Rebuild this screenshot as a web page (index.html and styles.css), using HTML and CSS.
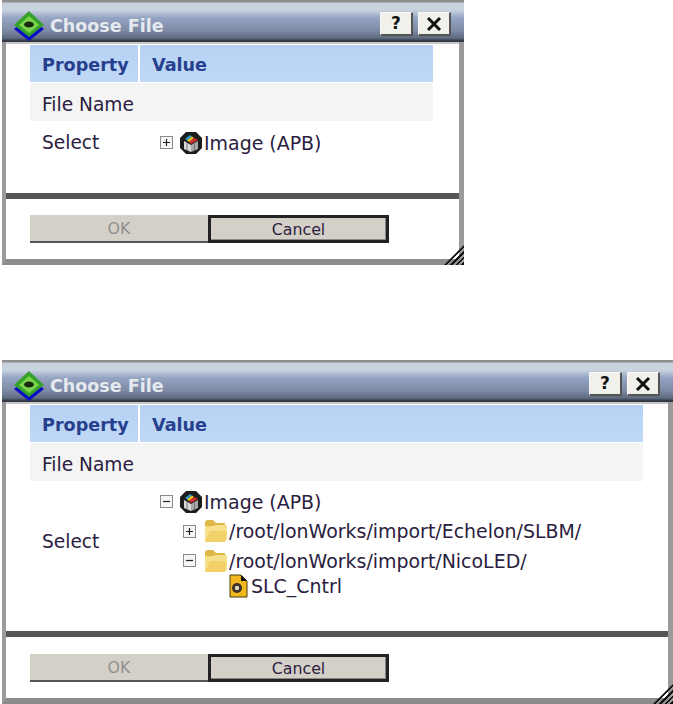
FILE: index.html
```html
<!DOCTYPE html>
<html lang="en">
<head>
  <meta charset="UTF-8" />
  <title>Choose File</title>
  <link rel="stylesheet" href="styles.css">
</head>
<body>
  <svg class="defs" width="0" height="0">
    <symbol id="logo" viewBox="0 0 32 32">
      <path d="M16 7 L31 19 L16 31 L1 19 Z" fill="#0a0ac8"/>
      <path d="M16 1 L31 15 L16 27 L1 15 Z" fill="#35a02a"/>
      <path d="M16 6 L26 15 L16 23 L6 15 Z" fill="#7cd44a"/>
      <ellipse cx="16" cy="14.5" rx="5" ry="3" fill="#1a2a10"/>
    </symbol>
    <symbol id="plus" viewBox="0 0 13 13">
      <rect x="0.5" y="0.5" width="12" height="12" fill="#f6f6f6" stroke="#8a8a8a"/>
      <path d="M3 6.5 H10 M6.5 3 V10" stroke="#222" stroke-width="1.2"/>
    </symbol>
    <symbol id="minus" viewBox="0 0 13 13">
      <rect x="0.5" y="0.5" width="12" height="12" fill="#f6f6f6" stroke="#8a8a8a"/>
      <path d="M3 6.5 H10" stroke="#222" stroke-width="1.2"/>
    </symbol>
    <symbol id="image" viewBox="0 0 24 24">
      <path d="M7 1 H17 L23 7 V17 L17 23 H7 L1 17 V7 Z" fill="#1c1c1c"/>
      <path d="M5 10 L12 14 V21 L5 18 Z" fill="#d8d8d8"/>
      <path d="M12 14 L19 10 V18 L12 21 Z" fill="#a8a8a8"/>
      <path d="M6 8 L11 4 L13 5.5 L8 9.5 Z" fill="#2a9ad0"/>
      <path d="M8 9.5 L13 5.5 L15 7 L10 11 Z" fill="#f0c820"/>
      <path d="M10 11 L15 7 L19 9 L12 13 Z" fill="#d03030"/>
      <path d="M8 12 V19 M15.5 13 V19" stroke="#777" stroke-width="1"/>
    </symbol>
    <symbol id="folder" viewBox="0 0 24 24">
      <path d="M1 4 Q1 1 4 1 H9 L12 4 H21 V8 H1 Z" fill="#e0b848"/>
      <path d="M1 23 V7 Q8 8 12 6 H23 V20 L21 23 Z" fill="#f6e08e"/>
      <path d="M1 23 L6 12 H23 L21 23 Z" fill="#f2d268"/>
    </symbol>
    <symbol id="cntrl" viewBox="0 0 19 24">
      <path d="M1 1 H12 L18 7 V23 H1 Z" fill="#f2b81e" stroke="#4a3a10"/>
      <path d="M12 1 V7 H18 Z" fill="#111"/>
      <circle cx="8" cy="14" r="5" fill="#3c3028"/>
      <circle cx="8" cy="14" r="2.2" fill="#e0d8c8"/>
    </symbol>
    <symbol id="close" viewBox="0 0 16 16">
      <path d="M2 2 L14 14 M14 2 L2 14" stroke="#111" stroke-width="3"/>
    </symbol>
  </svg>

  <div class="dialog dialog-small">
    <div class="titlebar">
      <svg class="logo"><use href="#logo"/></svg>
      <span class="title">Choose File</span>
      <button class="win-btn">?</button>
      <button class="win-btn"><svg class="close-icon"><use href="#close"/></svg></button>
    </div>
    <div class="content">
      <div class="table">
        <div class="th">Property</div>
        <div class="th">Value</div>
        <div class="cell shade">File Name</div>
        <div class="cell shade"></div>
        <div class="cell select-label">Select</div>
        <div class="tree">
          <div class="node">
            <svg class="toggle"><use href="#plus"/></svg>
            <svg class="icon"><use href="#image"/></svg>
            <span>Image (APB)</span>
          </div>
        </div>
      </div>
    </div>
    <div class="footer">
      <button class="btn" disabled>OK</button>
      <button class="btn btn-default">Cancel</button>
    </div>
    <div class="grip"></div>
  </div>

  <div class="dialog dialog-large">
    <div class="titlebar">
      <svg class="logo"><use href="#logo"/></svg>
      <span class="title">Choose File</span>
      <button class="win-btn">?</button>
      <button class="win-btn"><svg class="close-icon"><use href="#close"/></svg></button>
    </div>
    <div class="content">
      <div class="table">
        <div class="th">Property</div>
        <div class="th">Value</div>
        <div class="cell shade">File Name</div>
        <div class="cell shade"></div>
        <div class="cell select-label">Select</div>
        <div class="tree">
          <div class="node">
            <svg class="toggle"><use href="#minus"/></svg>
            <svg class="icon"><use href="#image"/></svg>
            <span>Image (APB)</span>
          </div>
          <div class="node level-1">
            <svg class="toggle"><use href="#plus"/></svg>
            <svg class="icon"><use href="#folder"/></svg>
            <span>/root/lonWorks/import/Echelon/SLBM/</span>
          </div>
          <div class="node level-1">
            <svg class="toggle"><use href="#minus"/></svg>
            <svg class="icon"><use href="#folder"/></svg>
            <span>/root/lonWorks/import/NicoLED/</span>
          </div>
          <div class="node level-2">
            <svg class="icon icon-file"><use href="#cntrl"/></svg>
            <span>SLC_Cntrl</span>
          </div>
        </div>
      </div>
    </div>
    <div class="footer">
      <button class="btn" disabled>OK</button>
      <button class="btn btn-default">Cancel</button>
    </div>
    <div class="grip"></div>
  </div>
</body>
</html>
```

FILE: styles.css
```css
body {
  margin: 0;
  background-color: white;
  font-family: 'DejaVu Sans', sans-serif;
  font-size: 18.6px;
  color: #2a2140;
  overflow: hidden;
}

.defs {
  position: absolute;
}

.dialog {
  position: relative;
  margin-left: 2px;
  box-sizing: border-box;
  background-color: white;
  border-left: 4px solid #9a9a9a;
  border-right: 5px solid #9a9a9a;
  border-bottom: 6px solid #8c8c8c;
  display: flex;
  flex-direction: column;
}
.dialog-small {
  width: 462px;
  height: 265px;
}
.dialog-large {
  width: 671px;
  height: 344px;
  margin-top: 95px;
}

.titlebar {
  height: 42px;
  margin: 0 -5px 0 -4px;
  padding: 6px 13px 0 11px;
  box-sizing: border-box;
  display: flex;
  align-items: center;
  background: linear-gradient(#8d8d8d 0, #8d8d8d 2px, #c5d0dc 3px, #c9d4e0 10px, #93a3c2 18px, #7f8ca8 30px, #5f6b80 38px, #2f3640 41px);
}
.logo {
  width: 32px;
  height: 32px;
  margin-top: 4px;
}
.title {
  margin: 4px 0 0 5px;
  flex: 1;
  font-weight: bold;
  font-size: 17.5px;
  color: #e6e9ee;
}
.win-btn {
  width: 33px;
  height: 24px;
  margin-left: 5px;
  padding: 0;
  background-color: #f1f0ea;
  border: 1px solid #f8f8f8;
  border-right: 2px solid #555;
  border-bottom: 2px solid #555;
  font-family: 'DejaVu Sans', sans-serif;
  font-size: 17px;
  font-weight: bold;
  color: #111;
  line-height: 1;
}
.close-icon {
  width: 16px;
  height: 16px;
  display: block;
  margin: 0 auto;
}

.content {
  flex: 1;
  padding: 1px 26px 0 24px;
  display: flex;
  border-top: 2px solid #c8c8c8;
  border-bottom: 6px solid #555;
}
.dialog-large .content {
  padding-right: 25px;
}
.table {
  flex: 1;
  display: grid;
  grid-template-columns: 108px 1fr;
  grid-template-rows: 37px 38px 1fr;
  column-gap: 2px;
  row-gap: 1px;
  align-self: stretch;
  margin-bottom: 22px;
}
.th {
  background: linear-gradient(#b6d2f4, #c0d8f6);
  color: #26408e;
  font-weight: bold;
  font-size: 17.6px;
  padding: 2px 0 0 12px;
  display: flex;
  align-items: center;
}
.cell {
  display: flex;
  align-items: center;
  padding: 4px 0 0 12px;
  white-space: nowrap;
}
.select-label {
  padding: 0 0 8px 12px;
}
.shade {
  background-color: #f4f4f4;
}
.table .shade:nth-child(4) {
  margin-left: -2px;
}

.tree {
  display: flex;
  flex-direction: column;
  justify-content: center;
  padding-left: 20px;
  padding-bottom: 8px;
  font-size: 18.95px;
}
.node {
  display: flex;
  align-items: center;
  height: 29.5px;
}
.level-1 {
  padding-left: 23px;
}
.level-1 .toggle {
  margin-right: 8px;
}
.level-2 {
  padding-left: 69px;
  height: 21px;
}
.toggle {
  width: 13px;
  height: 13px;
  margin-right: 6px;
}
.icon {
  width: 24px;
  height: 24px;
  margin-right: 1px;
}
.icon-file {
  width: 19px;
  margin-right: 3px;
}

.footer {
  height: 60px;
  flex-shrink: 0;
  padding: 16px 0 0 24px;
  box-sizing: border-box;
  display: flex;
  align-items: flex-start;
}
.dialog-large .footer {
  height: 61px;
  padding-top: 17px;
}
.btn {
  width: 178px;
  height: 28px;
  padding: 0;
  font-family: 'DejaVu Sans', sans-serif;
  font-size: 15.8px;
  background-color: #d4d0c8;
  color: #2a2140;
  border: none;
}
.btn:disabled {
  color: #8f8f8f;
  border-bottom: 2px solid #555;
}
.btn-default {
  width: 181px;
  border: 3px solid #222;
  box-shadow: inset -1px -1px 0 #888;
}

.grip {
  position: absolute;
  right: -5px;
  bottom: -6px;
  width: 20px;
  height: 20px;
  background: repeating-linear-gradient(135deg, transparent 0, transparent 2px, #111 2px, #111 4px);
  clip-path: polygon(100% 0, 100% 100%, 0 100%);
}
```
